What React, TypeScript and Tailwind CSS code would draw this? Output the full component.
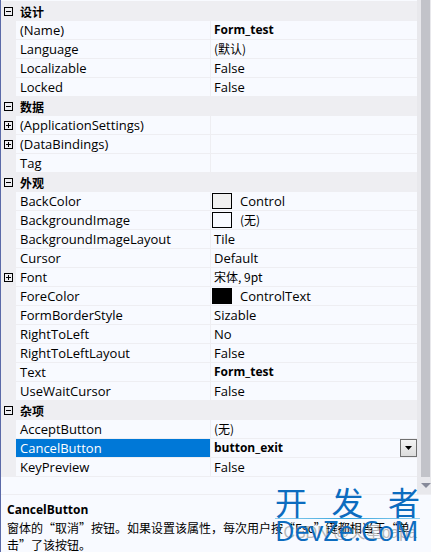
import { useState } from "react";
import clsx from "clsx";

type Property = {
  name: string;
  value?: string;
  cjk?: boolean;
  bold?: boolean;
  expandable?: boolean;
  swatch?: string;
  options?: string[];
};

type Category = {
  title: string;
  items: Property[];
};

const categories: Category[] = [
  {
    title: "设计",
    items: [
      { name: "(Name)", value: "Form_test", bold: true },
      { name: "Language", value: "(默认)", cjk: true },
      { name: "Localizable", value: "False" },
      { name: "Locked", value: "False" },
    ],
  },
  {
    title: "数据",
    items: [
      { name: "(ApplicationSettings)", expandable: true },
      { name: "(DataBindings)", expandable: true },
      { name: "Tag" },
    ],
  },
  {
    title: "外观",
    items: [
      { name: "BackColor", value: "Control", swatch: "bg-[#f0f0f0]" },
      { name: "BackgroundImage", value: "(无)", cjk: true, swatch: "bg-[#f8faff]" },
      { name: "BackgroundImageLayout", value: "Tile" },
      { name: "Cursor", value: "Default" },
      { name: "Font", value: "宋体, 9pt", cjk: true, expandable: true },
      { name: "ForeColor", value: "ControlText", swatch: "bg-black" },
      { name: "FormBorderStyle", value: "Sizable" },
      { name: "RightToLeft", value: "No" },
      { name: "RightToLeftLayout", value: "False" },
      { name: "Text", value: "Form_test", bold: true },
      { name: "UseWaitCursor", value: "False" },
    ],
  },
  {
    title: "杂项",
    items: [
      { name: "AcceptButton", value: "(无)", cjk: true },
      { name: "CancelButton", value: "button_exit", bold: true, options: ["button_exit", "(无)"] },
      { name: "KeyPreview", value: "False" },
    ],
  },
];

const cjkFont = "font-['Noto_Sans_CJK_SC',sans-serif] text-xs";

function Toggle({ open, label, onClick }: { open: boolean; label: string; onClick?: () => void }) {
  return (
    <button aria-expanded={open} aria-label={label} className="mx-auto block h-[9px] w-[9px]" onClick={onClick} type="button">
      <svg className="block" fill="none" height="9" shapeRendering="crispEdges" stroke="#000" viewBox="0 0 9 9" width="9">
        <path d="M.5 .5h8v8h-8zM2 4.5h5" />
        {!open && <path d="M4.5 2v5" />}
      </svg>
    </button>
  );
}

function ValueSelect({ item }: { item: Property }) {
  return (
    <div className="relative flex h-[18px] items-center">
      <select
        aria-label={item.name}
        className="h-[18px] w-full appearance-none bg-transparent pl-[3px] text-xs leading-[18px] font-bold outline-none"
        defaultValue={item.value}
      >
        {item.options?.map((option) => (
          <option key={option}>{option}</option>
        ))}
      </select>
      <span className="pointer-events-none absolute right-0 flex h-[18px] w-[17px] items-center justify-center border border-[#707070] bg-linear-to-b from-[#f4f4f4] to-[#dcdcdc]">
        <svg height="4" viewBox="0 0 7 4" width="7">
          <path d="M0 0h7L3.500 4z" />
        </svg>
      </span>
    </div>
  );
}

function PropertyRow({ item, selected, onSelect }: { item: Property; selected: boolean; onSelect: () => void }) {
  return (
    <tr className="h-[19px]" onClick={onSelect}>
      <td className="bg-[#eeeef2] p-0">{item.expandable && <Toggle label={item.name} open={false} />}</td>
      <th
        className={clsx(
          "overflow-hidden border-r border-b border-[#eeeef2] p-0 pl-1 text-left font-normal whitespace-nowrap",
          selected && "bg-[#0078d7] text-white",
        )}
        scope="row"
      >
        {item.name}
      </th>
      <td className="overflow-hidden border-b border-[#eeeef2] p-0 whitespace-nowrap">
        {item.options ? (
          <ValueSelect item={item} />
        ) : (
          <div className={clsx("flex h-[18px] items-center", item.swatch ? "gap-2 pl-px" : "pl-[3px]", item.bold && "text-xs font-bold")}>
            {item.swatch && <span className={clsx("h-4 w-5 border border-black", item.swatch)} />}
            <span className={clsx(item.cjk && cjkFont)}>{item.value}</span>
          </div>
        )}
      </td>
    </tr>
  );
}

function PropertyGrid() {
  const [collapsed, setCollapsed] = useState<string[]>([]);
  const [selected, setSelected] = useState("CancelButton");

  const toggle = (title: string) =>
    setCollapsed((prev) => (prev.includes(title) ? prev.filter((t) => t !== title) : [...prev, title]));

  return (
    <table className="w-full table-fixed border-separate border-spacing-0 border-t border-[#eeeef2]">
      <colgroup>
        <col className="w-[15px]" />
        <col className="w-[195px]" />
        <col />
      </colgroup>
      {categories.map((category) => {
        const open = !collapsed.includes(category.title);
        return (
          <tbody key={category.title}>
            <tr className="h-[19px] bg-[#eeeef2]">
              <td className="p-0">
                <Toggle label={category.title} onClick={() => toggle(category.title)} open={open} />
              </td>
              <th className={clsx("p-0 pl-1 text-left font-bold", cjkFont)} colSpan={2} scope="rowgroup">
                <div className="leading-[19px]">{category.title}</div>
              </th>
            </tr>
            {open &&
              category.items.map((item) => (
                <PropertyRow item={item} key={item.name} onSelect={() => setSelected(item.name)} selected={selected === item.name} />
              ))}
          </tbody>
        );
      })}
    </table>
  );
}

function ScrollBar() {
  return (
    <div className="flex w-[14px] shrink-0 flex-col bg-[#e8e8ec]">
      <div className="mr-px ml-1 flex-1 bg-[#c2c3c9]" />
      <button aria-label="向下滚动" className="flex h-[17px] items-center justify-center pl-1" type="button">
        <svg fill="#868999" height="5" viewBox="0 0 10 5" width="10">
          <path d="M0 0h10L5 5z" />
        </svg>
      </button>
    </div>
  );
}

function Watermark() {
  return (
    <div className="pointer-events-none absolute right-[11px] bottom-[6px] w-[145px] text-[#0c6cbf]">
      <div className="flex h-[30px] justify-between font-['Noto_Sans_CJK_SC',sans-serif] text-[32px] leading-[26px]">
        <span>开</span>
        <span>发</span>
        <span>者</span>
      </div>
      <div className="h-px bg-linear-to-r from-[#8fd0ee] via-[#2fa4dc] to-[#8fd0ee]" />
      <div className="h-7 font-['Open_Sans',sans-serif] text-[27px] leading-6 whitespace-nowrap">DevZe.CoM</div>
    </div>
  );
}

export default function App() {
  return (
    <div className="relative flex min-h-screen flex-col overflow-hidden border-l border-[#5b6aa8] bg-[#f8faff] font-['Open_Sans','Noto_Sans_CJK_SC',sans-serif] text-[13px] leading-[18px] text-black">
      <div className="flex">
        <div className="min-w-0 flex-1 pt-px pb-[17px]">
          <PropertyGrid />
        </div>
        <ScrollBar />
      </div>
      <section className="flex-1 border-t border-[#eeeef2] px-1.5 pt-1.5">
        <h2 className="text-xs leading-[18px] font-bold">CancelButton</h2>
        <p className={clsx("leading-[17px]", cjkFont)}>
          窗体的“取消”按钮。如果设置该属性，每次用户按“Esc”键都相当于“单击”了该按钮。
        </p>
      </section>
      <div className="pointer-events-none absolute right-[14px] bottom-2 font-['Liberation_Sans','Noto_Sans_CJK_SC',sans-serif] text-base whitespace-nowrap text-[#9a9a9a]/70">
        CSDN @火星papa
      </div>
      <Watermark />
    </div>
  );
}
